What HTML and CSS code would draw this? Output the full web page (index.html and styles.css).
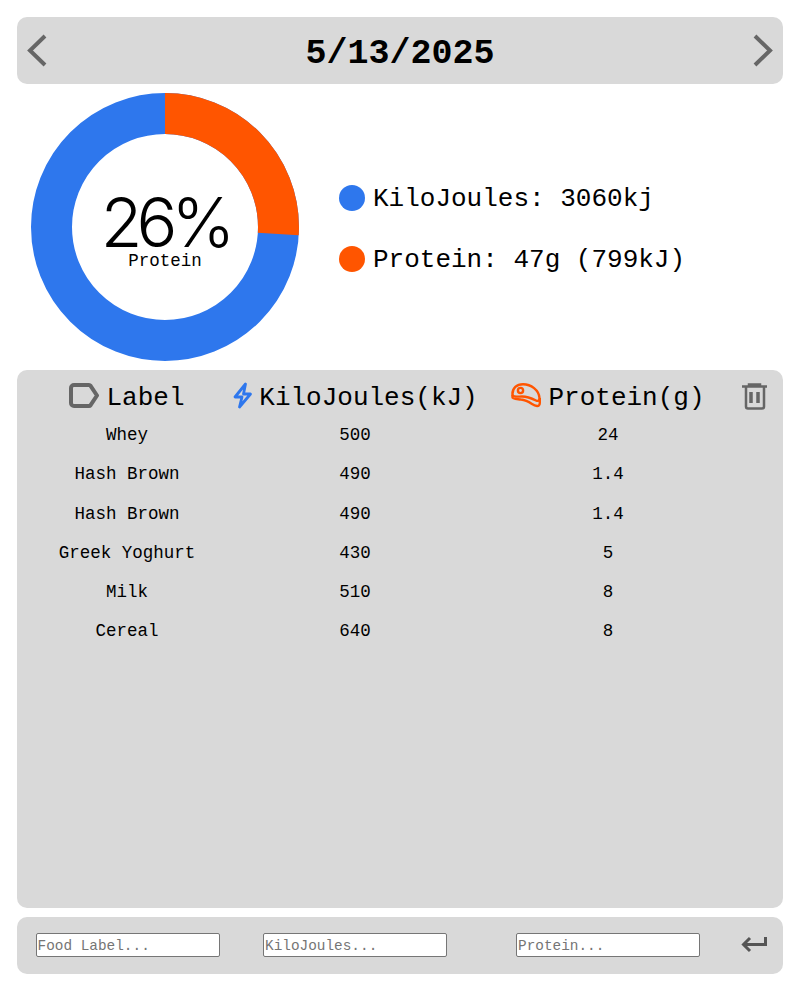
FILE: index.html
```html
<!DOCTYPE html>
<html lang="en">
<head>
<meta charset="utf-8">
<title>Food tracker</title>
<link rel="stylesheet" href="styles.css">
</head>
<body>
<main class="app">
  <header class="panel datebar">
    <svg class="chev" viewBox="0 0 20 33"><path d="M18 2 L3 16.5 L18 31"/></svg>
    <h1 class="date">5/13/2025</h1>
    <svg class="chev" viewBox="0 0 20 33"><path d="M2 2 L17 16.5 L2 31"/></svg>
  </header>
  <section class="summary">
    <div class="donut">
      <svg class="donut-svg" viewBox="0 0 268 268">
        <circle class="arc-kj" cx="134" cy="134" r="113.5"/>
        <circle class="arc-protein" cx="134" cy="134" r="113.5" pathLength="100" stroke-dasharray="26 74" transform="rotate(-90 134 134)"/>
      </svg>
      <div class="donut-label">
        <span class="pct">26%</span>
        <span class="pct-name">Protein</span>
      </div>
    </div>
    <ul class="legend">
      <li class="legend-item"><span class="dot dot-kj"></span>KiloJoules: 3060kj</li>
      <li class="legend-item"><span class="dot dot-protein"></span>Protein: 47g (799kJ)</li>
    </ul>
  </section>
  <section class="panel table">
    <div class="grid head">
      <div class="th">
        <svg class="ic ic-label" viewBox="0 0 30 25"><path d="M5 2 H20 a2 2 0 0 1 1.6 .8 L28 12.5 L21.6 22.2 a2 2 0 0 1 -1.6 .8 H5 a3 3 0 0 1 -3 -3 V5 a3 3 0 0 1 3 -3 Z"/></svg>
        <span>Label</span>
      </div>
      <div class="th">
        <svg class="ic ic-bolt" viewBox="0 0 21 27"><path d="M13.500 2 L3 15 H10 L7.500 25 L18.500 12 H11.500 Z"/></svg>
        <span>KiloJoules(kJ)</span>
      </div>
      <div class="th">
        <svg class="ic ic-meat" viewBox="0 0 30 26"><path d="M1.500 12 C1 5 6 1.200 12 1.200 C20 1.200 28 7 28.500 15 C28.700 17.500 27 18.500 25 17.500 C20 15 17 13.500 11 13.500 C7 13.500 2 14.500 1.500 12 Z"/><path d="M1.500 12 V14.500 C1.500 16 6 16 10 16.500 C15 17 18 19 21 21 C24 23 28.800 24.500 28.800 20 V15"/><circle cx="9.500" cy="7.500" r="2.600"/></svg>
        <span>Protein(g)</span>
      </div>
      <svg class="ic ic-trash" viewBox="0 0 25 27"><path d="M0 3.500 H25 M7 3 V1.500 H18 V3 M4 3.500 V23.500 a2 2 0 0 0 2 2 H20 a2 2 0 0 0 2 -2 V3.500"/><path class="bars" d="M9 9 V20 M16 9 V20"/></svg>
    </div>
    <div class="grid row"><div>Whey</div><div>500</div><div>24</div></div>
    <div class="grid row"><div>Hash Brown</div><div>490</div><div>1.4</div></div>
    <div class="grid row"><div>Hash Brown</div><div>490</div><div>1.4</div></div>
    <div class="grid row"><div>Greek Yoghurt</div><div>430</div><div>5</div></div>
    <div class="grid row"><div>Milk</div><div>510</div><div>8</div></div>
    <div class="grid row"><div>Cereal</div><div>640</div><div>8</div></div>
  </section>
  <form class="panel grid entry">
    <input class="field" type="text" placeholder="Food Label...">
    <input class="field" type="text" placeholder="KiloJoules...">
    <input class="field" type="text" placeholder="Protein...">
    <svg class="ic-enter" viewBox="0 0 26 17"><path d="M24.500 1 V8.500 H3 M9 2 L2.500 8.500 L9 15"/></svg>
  </form>
</main>
</body>
</html>
```
FILE: styles.css
```css
* { box-sizing: border-box; }
html, body { margin: 0; padding: 0; background: #fff; }
body { font-family: "Liberation Mono", monospace; color: #000; }
.app {
  height: 991px;
  padding: 17px;
  display: flex;
  flex-direction: column;
  gap: 9px;
}
.panel { background: #d9d9d9; border-radius: 10px; }
.datebar {
  height: 67px;
  flex: none;
  display: flex;
  align-items: center;
  justify-content: space-between;
  padding: 0 10px;
}
.date { margin: 8px 0 0; font-size: 35px; font-weight: 700; line-height: 1; }
.chev { width: 20px; height: 33px; fill: none; stroke: #666; stroke-width: 4; }
.summary { flex: none; height: 268px; display: flex; align-items: center; padding-left: 14px; gap: 40px; }
.donut { position: relative; width: 268px; height: 268px; }
.donut-svg { display: block; width: 268px; height: 268px; }
.arc-kj, .arc-protein { fill: none; stroke-width: 41; }
.arc-kj { stroke: #2e77ed; }
.arc-protein { stroke: #ff5500; }
.donut-label {
  position: absolute;
  inset: 0;
  display: flex;
  flex-direction: column;
  align-items: center;
  justify-content: center;
}
.pct { font-family: Inter, sans-serif; font-weight: 300; font-size: 68px; letter-spacing: -6px; line-height: 60px; margin-top: 8px; }
.pct-name { font-size: 17.5px; line-height: 18px; }
.legend { list-style: none; margin: 4px 0 0; padding: 0; display: flex; flex-direction: column; gap: 31px; }
.legend-item { display: flex; align-items: center; gap: 8px; font-size: 26px; line-height: 30px; }
.dot { width: 26px; height: 26px; border-radius: 50%; margin-top: -2px; }
.dot-kj { background: #2e77ed; }
.dot-protein { background: #ff5500; }
.table { flex: 1; padding-top: 6.5px; min-height: 0; }
.grid {
  display: grid;
  grid-template-columns: 220px 236px 270px 40px;
  justify-items: center;
  align-items: center;
}
.row { height: 39.2px; font-size: 17.5px; text-align: center; }
.head { height: 39.2px; font-size: 26px; }
.th { display: flex; align-items: center; gap: 7px; line-height: 30px; padding-top: 4px; }
.th .ic { margin-top: -5px; }
.ic { flex: none; fill: none; }
.ic-label { width: 30px; height: 25px; stroke: #666; stroke-width: 4; }
.ic-bolt { width: 21px; height: 27px; stroke: #2e77ed; stroke-width: 2.800; stroke-linejoin: round; margin-right: -1px; }
.ic-meat { width: 30px; height: 26px; stroke: #ff5500; stroke-width: 2.400; }
.ic-trash { width: 25px; height: 27px; stroke: #666; stroke-width: 2.500; justify-self: start; margin-left: -1px; }
.ic-trash .bars { stroke-width: 3.500; }
.entry { height: 57px; flex: none; padding-bottom: 2px; }
.field {
  width: 184px;
  height: 24px;
  padding: 2px 1px 0;
  background: #fff;
  border: 1px solid #767676;
  border-radius: 2px;
  font-family: "Liberation Mono", monospace;
  font-size: 14.4px;
}
.field:first-child { margin-left: 1px; }
.field::placeholder { color: #757575; opacity: 1; }
.ic-enter { width: 26px; height: 17px; fill: none; stroke: #555; stroke-width: 3; justify-self: start; margin-left: -2px; }
```
